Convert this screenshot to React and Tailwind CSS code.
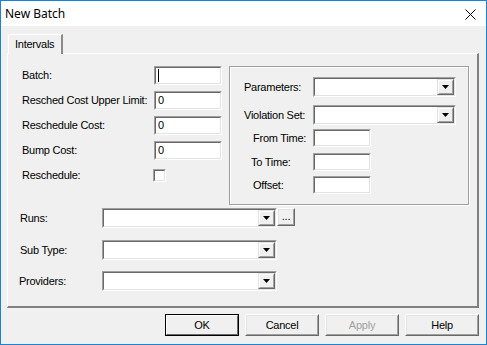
import React from 'react';

function Sunken({ className = '', children }) {
  return (
    <div className={`border border-t-[#a0a0a0] border-l-[#a0a0a0] border-b-white border-r-white ${className}`}>
      <div className="h-full w-full border border-t-[#696969] border-l-[#696969] border-b-[#e3e3e3] border-r-[#e3e3e3] bg-white flex justify-end">
        {children}
      </div>
    </div>
  );
}

function Arrow() {
  return (
    <div className="h-full w-[17px] border border-t-[#e3e3e3] border-l-[#e3e3e3] border-b-[#696969] border-r-[#696969]">
      <div className="h-full w-full border border-t-white border-l-white border-b-[#a0a0a0] border-r-[#a0a0a0] bg-[#f0f0f0] flex items-center justify-center">
        <svg width="7" height="4" viewBox="0 0 7 4">
          <path d="M0 0h7L3.5 4z" fill="#000" />
        </svg>
      </div>
    </div>
  );
}

function Combo({ className = '' }) {
  return (
    <Sunken className={className}>
      <Arrow />
    </Sunken>
  );
}

function Button({ children, isDefault, disabled }) {
  return (
    <div
      className={`w-[74px] h-[22px] flex items-center justify-center text-[11px] ${
        isDefault
          ? 'border border-[#000]'
          : 'border border-t-white border-l-white border-b-[#696969] border-r-[#696969]'
      } ${disabled ? 'text-[#a0a0a0]' : 'text-black'}`}
    >
      <div
        className={`h-full w-full flex items-center justify-center ${
          isDefault
            ? 'border border-t-white border-l-white border-b-[#696969] border-r-[#696969]'
            : 'border border-t-[#e3e3e3] border-l-[#e3e3e3] border-b-[#a0a0a0] border-r-[#a0a0a0]'
        }`}
      >
        {children}
      </div>
    </div>
  );
}

export default function App() {
  const leftRows = [
    { label: 'Batch:', value: '', caret: true },
    { label: 'Resched Cost Upper Limit:', value: '0' },
    { label: 'Reschedule Cost:', value: '0' },
    { label: 'Bump Cost:', value: '0' },
  ];

  return (
    <div
      className="w-[487px] h-[345px] border border-[#1883d7] bg-[#f0f0f0] flex flex-col text-black tracking-[-0.25px]"
      style={{ fontFamily: '"Liberation Sans", Arial, sans-serif' }}
    >
      {/* title bar */}
      <div className="h-[25px] bg-white flex items-center justify-between pl-[4px] pr-[10px] tracking-normal">
        <span className="text-[12px]" style={{ fontFamily: '"Noto Sans", "Liberation Sans", sans-serif' }}>
          New Batch
        </span>
        <svg width="11" height="11" viewBox="0 0 11 11" className="mt-[1px]">
          <path d="M0.5 0.5L10.5 10.5M10.5 0.5L0.5 10.5" stroke="#000" strokeWidth="1" />
        </svg>
      </div>

      <div className="flex flex-col pt-[8px] pl-[6px] pr-[7px]">
        {/* tab */}
        <div className="flex">
          <div className="ml-[1px] h-[20px] w-[55px] -mb-px relative z-10 bg-[#f0f0f0] border-t border-l border-white border-r-2 border-r-[#8a8a8a] rounded-tl-[2px] flex items-center pl-[6px] text-[11px]">
            Intervals
          </div>
        </div>

        {/* tab panel */}
        <div className="h-[255px] border-t border-l border-white border-r-2 border-b-2 border-r-[#808080] border-b-[#808080] flex flex-col">
          <div className="flex">
            {/* left fields */}
            <div className="flex flex-col pl-[14px] pt-[12px] gap-[6px]">
              {leftRows.map((row) => (
                <div key={row.label} className="flex items-center h-[19px]">
                  <span className="w-[132px] text-[11px]">{row.label}</span>
                  <Sunken className="w-[68px] h-[19px]">
                    <div className="flex-1 flex items-center pl-[2px] text-[11px]">
                      {row.caret ? <div className="w-px h-[13px] bg-black" /> : row.value}
                    </div>
                  </Sunken>
                </div>
              ))}
              <div className="flex items-center h-[17px] mt-[1px]">
                <span className="w-[131px] text-[11px]">Reschedule:</span>
                <div className="w-[13px] h-[13px] border border-t-[#a0a0a0] border-l-[#a0a0a0] border-b-white border-r-white">
                  <div className="h-full w-full border border-t-[#696969] border-l-[#696969] border-b-[#e3e3e3] border-r-[#e3e3e3] bg-white" />
                </div>
              </div>
            </div>

            {/* group box */}
            <div className="ml-[7px] mt-[12px] w-[240px] h-[139px] border border-[#a0a0a0] shadow-[inset_1px_1px_0_#fff,1px_1px_0_#fff] flex flex-col pt-[10px]">
              <div className="flex items-center h-[20px]">
                <span className="w-[83px] pl-[14px] text-[11px]">Parameters:</span>
                <Combo className="w-[143px] h-[20px]" />
              </div>
              <div className="flex items-center h-[20px] mt-[8px]">
                <span className="w-[83px] pl-[14px] text-[11px]">Violation Set:</span>
                <Combo className="w-[143px] h-[20px]" />
              </div>
              <div className="flex items-center h-[18px] mt-[4px]">
                <span className="w-[83px] pl-[23px] text-[11px]">From Time:</span>
                <Sunken className="w-[58px] h-[18px]" />
              </div>
              <div className="flex items-center h-[18px] mt-[6px]">
                <span className="w-[83px] pl-[21px] text-[11px]">To Time:</span>
                <Sunken className="w-[58px] h-[18px]" />
              </div>
              <div className="flex items-center h-[18px] mt-[5px]">
                <span className="w-[83px] pl-[23px] text-[11px]">Offset:</span>
                <Sunken className="w-[58px] h-[18px]" />
              </div>
            </div>
          </div>

          {/* lower combos */}
          <div className="flex flex-col pl-[12px] mt-[3px]">
            <div className="flex items-center h-[20px]">
              <span className="w-[82px] text-[11px]">Runs:</span>
              <Combo className="w-[175px] h-[20px]" />
              <div className="w-[18px] h-[18px] self-start border border-t-white border-l-white border-b-[#696969] border-r-[#696969]">
                <div className="h-full w-full border border-t-[#e3e3e3] border-l-[#e3e3e3] border-b-[#a0a0a0] border-r-[#a0a0a0] flex items-center justify-center text-[11px] leading-none pb-[2px]">
                  ...
                </div>
              </div>
            </div>
            <div className="flex items-center h-[20px] mt-[12px]">
              <span className="w-[82px] text-[11px]">Sub Type:</span>
              <Combo className="w-[175px] h-[20px]" />
            </div>
            <div className="flex items-center h-[20px] mt-[11px]">
              <span className="w-[82px] -ml-px text-[11px]">Providers:</span>
              <Combo className="w-[175px] h-[20px] ml-px" />
            </div>
          </div>
        </div>

        {/* buttons */}
        <div className="flex justify-end gap-[6px] mt-[6px]">
          <Button isDefault>OK</Button>
          <Button>Cancel</Button>
          <Button disabled>Apply</Button>
          <Button>Help</Button>
        </div>
      </div>
    </div>
  );
}
